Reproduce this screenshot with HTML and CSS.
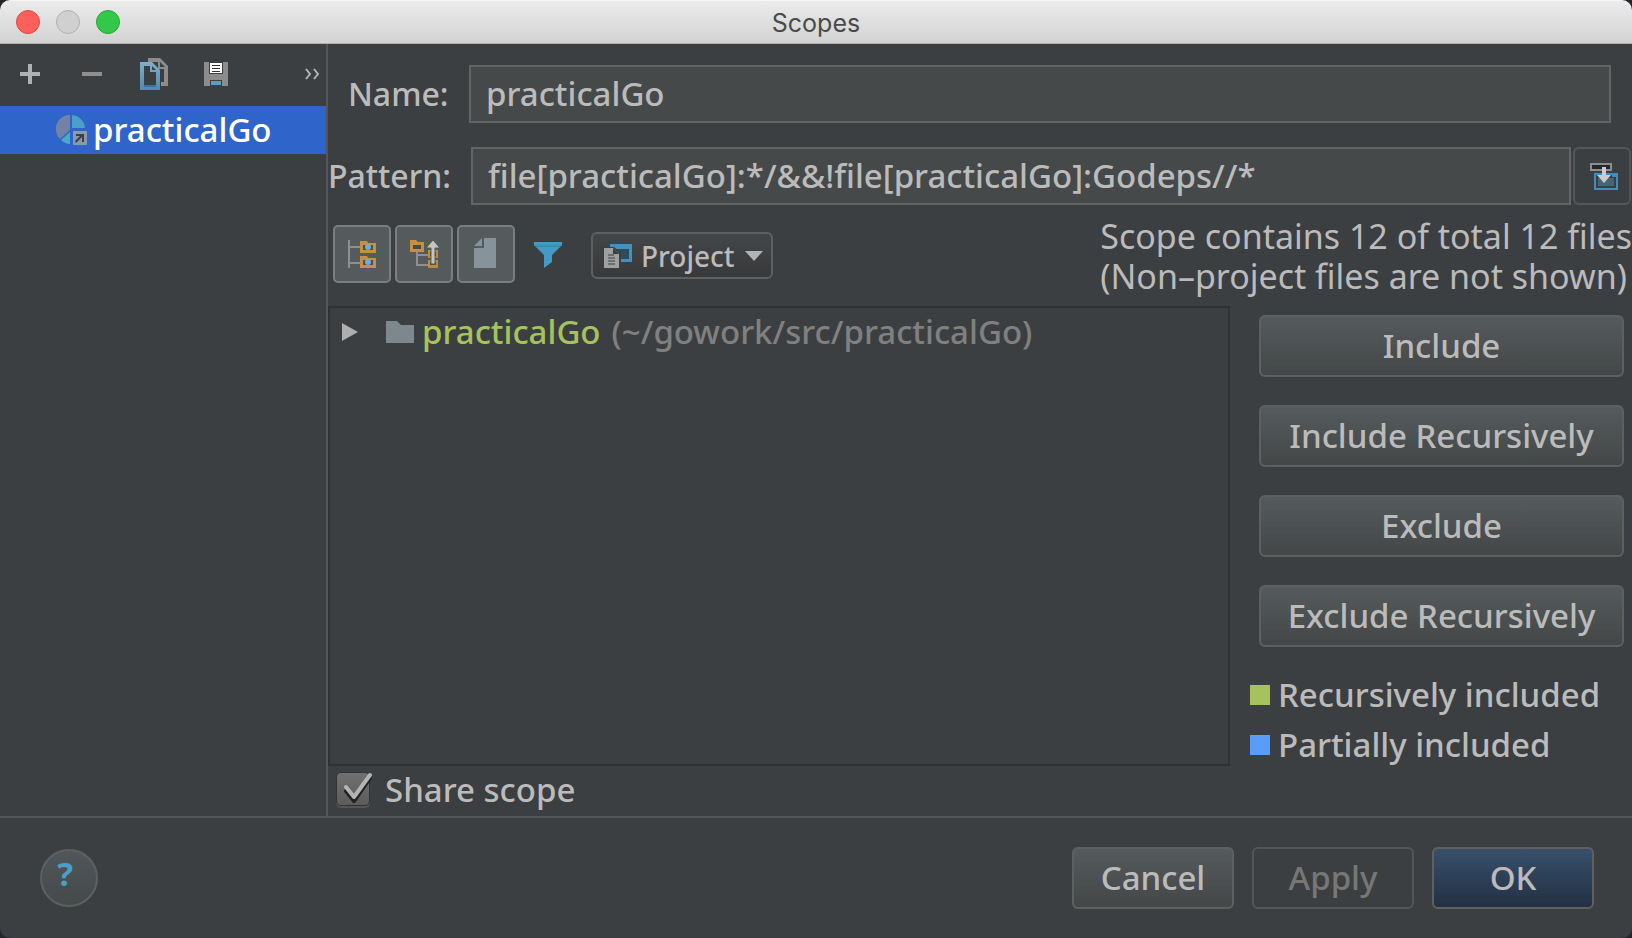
FILE: index.html
```html
<!DOCTYPE html>
<html lang="en">
<head>
<meta charset="utf-8">
<title>Scopes</title>
<link rel="stylesheet" href="styles.css">
</head>
<body>
<div class="window">
  <header class="titlebar">
    <div class="lights">
      <button class="light close" aria-label="Close"></button>
      <button class="light minimize" aria-label="Minimize" disabled></button>
      <button class="light maximize" aria-label="Zoom"></button>
    </div>
    <h1 class="title">Scopes</h1>
  </header>

  <div class="content">
    <aside class="sidebar">
      <div class="actions">
        <button class="action" aria-label="Add scope">
          <svg width="32" height="32" viewBox="0 0 32 32"><path d="M6 14h8V6h4v8h8v4h-8v8h-4v-8H6z" fill="#afb1b3"/></svg>
        </button>
        <button class="action" aria-label="Remove scope">
          <svg width="32" height="32" viewBox="0 0 32 32"><path d="M6 14h20v4H6z" fill="#8f8f8f"/></svg>
        </button>
        <button class="action" aria-label="Copy scope">
          <svg width="32" height="32" viewBox="0 0 32 32">
            <defs><linearGradient id="page" x1="0" y1="0" x2="0" y2="1"><stop offset="0" stop-color="#7fb0cb"/><stop offset="1" stop-color="#5189ad"/></linearGradient></defs>
            <path d="M10 0h12l8 8v20h-7v-4h3V11h-6V4H10z" fill="#8c8c8c"/><path d="M22 4v5h5z" fill="#3c3f41"/>
            <path fill-rule="evenodd" d="M2 4h12l8 8v20H2zM6 8v20h12V14h-6V8z" fill="url(#page)"/><path d="M14 8v4h4z" fill="#3c3f41"/><path d="M6 27h12v2H6z" fill="#3a74a5"/>
          </svg>
        </button>
        <button class="action" aria-label="Save as">
          <svg width="32" height="32" viewBox="0 0 32 32">
            <path d="M4 4h24v24H4z" fill="#8c8c8c"/><path d="M9 4h14v12H9zM10 22h12v6H10z" fill="#3c3f41"/>
            <path d="M10 5h12v10H10z" fill="#fff"/><path d="M12 7h8v1h-8zm0 3h8v1h-8zm0 3h8v1h-8z" fill="#333"/><path d="M11 23h10v4H11z" fill="#579fc9"/>
          </svg>
        </button>
        <button class="action more" aria-label="More actions">
          <svg width="16" height="12" viewBox="0 0 16 12" fill="none" stroke="#b4b4b4" stroke-width="2"><path d="M2 1l4 5-4 5M10 1l4 5-4 5"/></svg>
        </button>
      </div>
      <ul class="scopes">
        <li><button class="scope">
          <svg width="32" height="32" viewBox="0 0 32 32">
            <path d="M14 1A14 14 0 0 0 4 25l10-9z" fill="#7382a5"/><path d="M16 1a14 14 0 0 1 13 13H16z" fill="#4aa0c7"/><path d="M14 18v12a14 14 0 0 1-9-4z" fill="#4aa8c9"/>
            <path d="M17 17h14v14H17z" fill="#8799ab"/><path d="M20 20h8v8h-2v-5l-6 6-1-2 5-5h-4z" fill="#3c3f46"/>
          </svg>
          <span>practicalGo</span>
        </button></li>
      </ul>
    </aside>

    <main class="editor">
      <div class="field name-field">
        <label for="name">Name:</label>
        <input id="name" type="text" value="practicalGo">
      </div>
      <div class="field pattern-field">
        <label for="pattern">Pattern:</label>
        <input id="pattern" type="text" value="file[practicalGo]:*/&amp;&amp;!file[practicalGo]:Godeps//*">
        <button class="expand" aria-label="Expand pattern editor">
          <svg width="32" height="32" viewBox="0 0 32 32">
            <path d="M3 4h20v6H3z" fill="#262728" stroke="#8f8f8f" stroke-width="2"/>
            <path d="M7 14h22v15H7z" fill="#3c3f41" stroke="#3d8fc0" stroke-width="2"/><path d="M24 13h6v4h-6z" fill="#3d8fc0"/><path d="M10 18h16v8H10z" fill="#44657a"/>
            <path d="M14 7h4v8h5l-7 8-7-8h5z" fill="#cdcdcd"/>
          </svg>
        </button>
      </div>

      <div class="toolrow">
        <div class="toggles">
          <button class="toggle" aria-label="Flatten packages" aria-pressed="true">
            <svg width="32" height="32" viewBox="0 0 32 32">
              <path d="M3 2v28M4 9h10M4 25h10" fill="none" stroke="#8f8f8f" stroke-width="2"/>
              <path d="M14 3h7l1 2h8v10H14zM14 18h7l1 2h8v10H14z" fill="#c78f42"/>
              <path d="M17 7h10v5H17zM17 22h10v5H17z" fill="#4b5050"/><circle cx="22" cy="9" r="3" fill="#70add1"/><circle cx="22" cy="24" r="3" fill="#70add1"/>
            </svg>
          </button>
          <button class="toggle" aria-label="Compact empty middle packages" aria-pressed="true">
            <svg width="32" height="32" viewBox="0 0 32 32">
              <path d="M9 14v13h11M9 17h11" fill="none" stroke="#8f8f8f" stroke-width="2"/>
              <path d="M2 2h6l2 2h6v10H2z" fill="#c78f42"/><path d="M5 7h8v4H5z" fill="#474c4d"/>
              <path d="M20 12h10v8H20zM20 22h10v8H20z" fill="#c08a3c"/><path d="M22 14h6v4h-6zM22 24h6v3h-6z" fill="#4b5050"/>
              <path d="M25 2l7 8h-5v16h-4V10h-5z" fill="#c4c4c4" stroke="#555a5b" stroke-width="1"/>
            </svg>
          </button>
          <button class="toggle" aria-label="Show files" aria-pressed="true">
            <svg width="32" height="32" viewBox="0 0 32 32"><path d="M14 0h12v30H4V10h10z" fill="#87939a"/><path d="M12 0v8H4z" fill="#87939a"/><path d="M12 0h2v10H4V8h8z" fill="#555a5c"/></svg>
          </button>
        </div>
        <button class="filter" aria-label="Show only included">
          <svg width="28" height="28" viewBox="0 0 28 28"><path d="M0 1h28v3L18 14v7l-8 6V14L0 4z" fill="#4499c5"/><path d="M1 5h26" stroke="#3580ab" stroke-width="1"/></svg>
        </button>
        <div class="viewpicker">
          <svg class="view-icon" width="30" height="26" viewBox="0 0 30 26">
            <path d="M7 1h22v18H7z" fill="#4492ba"/><path d="M10 6h16v10H10z" fill="#2d4b5c"/>
            <path d="M0 4h11l7 6v16H0z" fill="#3c3f41"/><path d="M1 5h9l6 6v14H1z" fill="#a0a0a0"/><path d="M10 5v6h6z" fill="#3c3f41"/><path d="M5 12h6M5 15h7M5 18h7M5 21h7" stroke="#3c3f41" stroke-width="1"/>
          </svg>
          <select aria-label="View"><option>Project</option></select>
          <svg class="caret" width="18" height="10" viewBox="0 0 18 10"><path d="M0 0h18L9 10z" fill="#b4b4b4"/></svg>
        </div>
        <p class="summary">Scope contains 12 of total 12 files<br>(Non–project files are not shown)</p>
      </div>

      <div class="workspace">
        <div class="tree">
          <div class="node">
            <button class="disclosure" aria-label="Expand practicalGo"><svg width="16" height="18" viewBox="0 0 16 18"><path d="M0 0l16 9-16 9z" fill="#afafaf"/></svg></button>
            <svg width="28" height="22" viewBox="0 0 28 22"><path d="M0 0h11l4 4h13v18H0z" fill="#7d888e"/></svg>
            <span class="node-name">practicalGo</span>
            <span class="node-path">(~/gowork/src/practicalGo)</span>
          </div>
        </div>
        <div class="controls">
          <div class="stack">
            <button class="btn">Include</button>
            <button class="btn">Include Recursively</button>
            <button class="btn">Exclude</button>
            <button class="btn">Exclude Recursively</button>
          </div>
          <ul class="legend">
            <li><span class="swatch full"></span>Recursively included</li>
            <li><span class="swatch partial"></span>Partially included</li>
          </ul>
        </div>
      </div>

      <label class="share">
        <span class="check">
          <input type="checkbox" checked>
          <svg width="36" height="36" viewBox="0 0 36 36" fill="none" stroke-linecap="round" stroke-linejoin="round"><path d="M10 19l8 10L34 6" stroke="#222" stroke-width="4"/><path d="M10 15l8 10L34 3" stroke="#b4b4b4" stroke-width="4"/></svg>
        </span>
        Share scope
      </label>
    </main>
  </div>

  <footer class="footer">
    <button class="help" aria-label="Help"><span>?</span></button>
    <div class="dialog-actions">
      <button class="btn">Cancel</button>
      <button class="btn" disabled>Apply</button>
      <button class="btn primary">OK</button>
    </div>
  </footer>
</div>
</body>
</html>
```
FILE: styles.css
```css
* { box-sizing: border-box; }

body {
  margin: 0;
  background: #25262c;
  color: #bbbbbb;
  font: 500 33px/40px "Noto Sans", "Open Sans", sans-serif;
}

button, input, select { font: inherit; color: inherit; margin: 0; }
button { background: none; border: 0; padding: 0; }
svg { display: block; flex: none; }
ul { list-style: none; margin: 0; padding: 0; }

.window {
  display: flex;
  flex-direction: column;
  min-height: 100vh;
  background: #3c3f41;
  border-radius: 10px;
  overflow: hidden;
}

.titlebar {
  display: grid;
  grid-template-columns: 1fr auto 1fr;
  align-items: center;
  height: 44px;
  padding: 0 16px;
  background: linear-gradient(#ebebeb, #d3d3d3);
  border-top: 1px solid #f6f6f6;
  border-bottom: 1px solid #b0b0b0;
}
.lights { display: flex; gap: 16px; }
.light { width: 24px; height: 24px; border-radius: 50%; border: 1px solid; }
.close { background: #fc605c; border-color: #e2463f; }
.minimize { background: #d0d0d0; border-color: #b0b0b0; }
.maximize { background: #34c84a; border-color: #24a732; }
.title { margin: 0; padding-top: 2px; font: 400 25px/40px Inter, Roboto, sans-serif; color: #4a4a4a; }

.content { display: flex; flex: 1; }

.sidebar { width: 328px; flex: none; border-right: 2px solid #555555; }
.actions { display: flex; align-items: center; height: 62px; padding: 0 6px 2px 14px; gap: 30px; }
.more { margin-left: auto; }
.scope {
  display: flex;
  align-items: center;
  gap: 5px;
  width: 100%;
  height: 48px;
  padding-left: 56px;
  background: #2f65ca;
  color: #ffffff;
}

.editor { display: flex; flex-direction: column; flex: 1; min-width: 0; }

.field { display: flex; align-items: center; height: 58px; }
.field label { font-size: 32px; }
.field input {
  flex: 1;
  min-width: 0;
  height: 58px;
  padding: 0 15px 2px;
  background: #45494a;
  border: 2px solid #646464;
  border-radius: 0;
}
.name-field { margin: 21px 21px 0 0; padding-left: 20px; }
.name-field label { width: 121px; }
.pattern-field { margin: 24px 1px 0 0; }
.pattern-field label { width: 143px; }
.expand {
  display: grid;
  place-items: center;
  width: 58px;
  height: 58px;
  margin-left: 2px;
  padding-left: 4px;
  border: 2px solid #555555;
  border-radius: 6px;
}

.toolrow { display: flex; align-items: center; height: 101px; padding-left: 5px; }
.toggles { display: flex; gap: 4px; padding-bottom: 3px; }
.toggle {
  display: grid;
  place-items: center;
  width: 58px;
  height: 58px;
  background: #555a5c;
  border: 2px solid #7a7e80;
  border-radius: 5px;
}
.filter { margin-left: 19px; padding-bottom: 2px; }
.viewpicker {
  display: grid;
  grid-template-columns: 38px 1fr 18px;
  align-items: center;
  width: 182px;
  height: 47px;
  margin-left: 29px;
  padding: 0 8px 0 10px;
  background: linear-gradient(#434648, #38393b);
  border: 2px solid #5e6060;
  border-radius: 6px;
}
.viewpicker select {
  width: 100%;
  padding: 0;
  border: 0;
  background: none;
  appearance: none;
  font-size: 28px;
  line-height: 40px;
}
.summary { margin: 0 0 0 auto; font-size: 34px; font-weight: 400; white-space: nowrap; }

.workspace { display: flex; flex: 1; }
.tree { flex: 1; min-width: 0; border: 2px solid #323232; }
.node { display: flex; align-items: center; height: 48px; padding-left: 12px; }
.disclosure { margin-right: 28px; }
.node-name { margin-left: 8px; color: #a5c25c; }
.node-path { margin-left: 11px; color: #808080; }

.controls { width: 402px; flex: none; padding: 9px 8px 0 20px; }
.stack { display: flex; flex-direction: column; gap: 28px; padding-left: 9px; }
.btn {
  height: 62px;
  padding-bottom: 1px;
  background: linear-gradient(#555a5c, #434748);
  border: 2px solid #5e6060;
  border-radius: 6px;
}
.btn:disabled { background: none; border-color: #555555; color: #777777; }
.btn.primary { background: linear-gradient(#384f6b, #233143); }
.legend { display: grid; gap: 10px; margin-top: 28px; }
.legend li { display: flex; align-items: center; gap: 8px; height: 40px; white-space: nowrap; }
.swatch { width: 20px; height: 20px; }
.full { background: #a5c25c; }
.partial { background: #589df6; }

.share { display: flex; align-items: center; gap: 13px; height: 50px; padding: 0 0 2px 8px; }
.check { display: grid; }
.check > * { grid-area: 1 / 1; }
.check svg { pointer-events: none; }
.check input {
  appearance: none;
  width: 34px;
  height: 34px;
  background: linear-gradient(#707070, #5c5c5c);
  border: 1px solid #333333;
  border-radius: 5px;
  box-shadow: 0 2px 0 #555555;
}

.footer {
  display: flex;
  align-items: center;
  justify-content: space-between;
  height: 122px;
  padding: 0 38px 0 40px;
  border-top: 2px solid #555555;
}
.help {
  width: 58px;
  height: 58px;
  padding: 0 8px 8px 0;
  background: linear-gradient(#50565a, #45494a);
  border: 2px solid #5e6060;
  border-radius: 50%;
  color: #4a9fc9;
  font-weight: 700;
}
.dialog-actions { display: flex; gap: 18px; }
.dialog-actions .btn { width: 162px; }
```
